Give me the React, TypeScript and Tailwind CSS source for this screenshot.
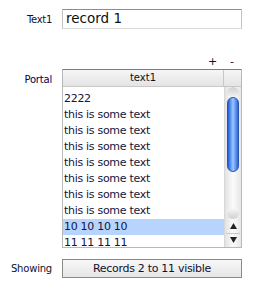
import React from "react";

const rows = [
  "2222",
  "this is some text",
  "this is some text",
  "this is some text",
  "this is some text",
  "this is some text",
  "this is some text",
  "this is some text",
  "10 10 10 10",
  "11 11 11 11",
];

export default function App() {
  return (
    <div
      className="w-[264px] h-[300px] bg-white text-[#14143c] overflow-hidden"
      style={{ fontFamily: '"DejaVu Sans", Verdana, sans-serif' }}
    >
      {/* Text1 row */}
      <div className="flex items-center pt-[9px]">
        <div className="w-[52px] text-right text-[10px] tracking-[-0.3px] leading-none text-[#101030] pt-[1px]">Text1</div>
        <div className="ml-[10px] w-[180px] h-[20px] border border-[#c4c4c4] border-t-[#8c8c8c] border-b-[#dcdcdc] flex items-center pl-[3px] text-[13.5px] leading-none text-[#101010]">
          record 1
        </div>
      </div>

      {/* + - row */}
      <div className="flex mt-[25px] h-[14px] items-center text-[11px] leading-none text-[#101030]">
        <div className="ml-[208px] w-[8px] text-center">+</div>
        <div className="ml-[12px] w-[8px] text-center">-</div>
      </div>

      {/* Portal row */}
      <div className="flex mt-[1px]">
        <div className="w-[52px] pt-[6px] text-right text-[10px] tracking-[-0.2px] leading-none text-[#000050]">Portal</div>
        <div className="ml-[10px] w-[180px] h-[179px] border border-[#b8b8b8] border-t-[#7c7c7c] flex flex-col">
          {/* header */}
          <div className="flex h-[17px] border-b border-[#c8c8c8] bg-gradient-to-b from-[#f6f6f6] to-[#e4e4e4]">
            <div className="w-[161px] border-r border-[#c8c8c8] flex items-center justify-center text-[10px] leading-none text-[#101010]">
              text1
            </div>
            <div className="flex-1" />
          </div>
          {/* body */}
          <div className="flex flex-1 min-h-0">
            <div className="w-[161px] pt-[4px] overflow-hidden">
              {rows.map((r, i) => (
                <div
                  key={i}
                  className={
                    "h-[16px] leading-[16px] pl-[1px] text-[11px] tracking-[-0.3px] whitespace-nowrap " +
                    (i === 8 ? "bg-[#b6d4fd]" : "")
                  }
                >
                  {r}
                </div>
              ))}
            </div>
            {/* scrollbar */}
            <div className="flex-1 flex flex-col border-l border-[#d8d8d8] bg-gradient-to-r from-[#e2e2e2] via-[#fbfbfb] to-[#e6e6e6]">
              <div className="h-[10px] mx-[2px] rounded-t-full bg-gradient-to-b from-[#cfcfcf] to-[#f2f2f2]" />
              <div className="h-[75px] mx-[2px] rounded-full border border-[#2b55b0] bg-gradient-to-r from-[#1e5ad8] via-[#9cc8ff] to-[#2a64dc]" />
              <div className="flex-1" />
              <div className="h-[10px] mx-[2px] rounded-b-full bg-gradient-to-b from-[#f4f4f4] to-[#d0d0d0]" />
              <div className="h-[14px] flex items-center justify-center">
                <svg width="7" height="6" viewBox="0 0 7 6">
                  <path d="M3.5 0 L7 6 L0 6 Z" fill="#222" />
                </svg>
              </div>
              <div className="h-[1px] bg-[#c8c8c8] mx-[1px]" />
              <div className="h-[13px] flex items-start justify-center pt-[3px]">
                <svg width="7" height="6" viewBox="0 0 7 6">
                  <path d="M0 0 L7 0 L3.5 6 Z" fill="#222" />
                </svg>
              </div>
            </div>
          </div>
        </div>
      </div>

      {/* Showing row */}
      <div className="flex items-center mt-[11px]">
        <div className="w-[52px] text-right text-[10px] tracking-[-0.2px] leading-none text-[#101030]">Showing</div>
        <div className="ml-[10px] w-[180px] h-[19px] border border-[#8a8a8a] bg-gradient-to-b from-[#f7f7f7] to-[#e6e6e6] flex items-center justify-center text-[11px] tracking-[-0.3px] leading-none text-[#101030]">
          Records 2 to 11 visible
        </div>
      </div>
    </div>
  );
}
